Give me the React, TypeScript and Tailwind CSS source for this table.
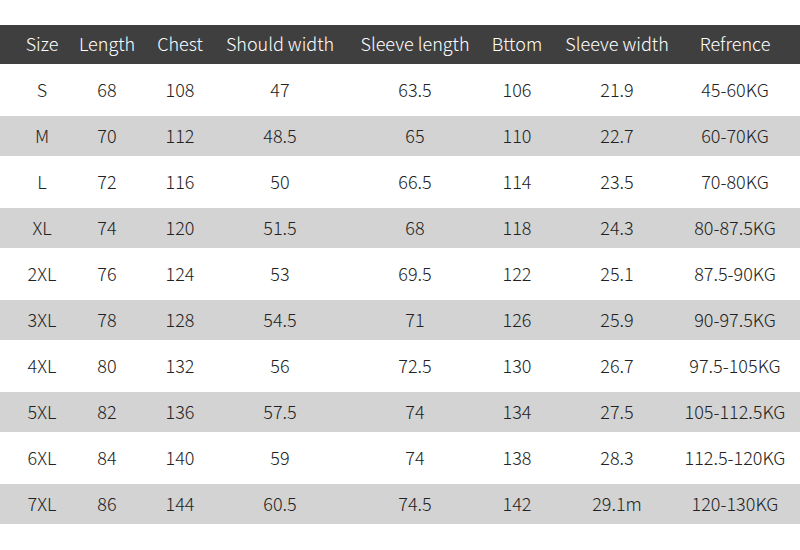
const cols = [
  { c: 'w-[84px]' },
  { c: 'w-[46px]' },
  { c: 'w-[100px]' },
  { c: 'w-[100px]' },
  { c: 'w-[170px]' },
  { c: 'w-[34px]' },
  { c: 'w-[166px]' },
  { c: 'w-[70px]' },
];

const header = ['Size', 'Length', 'Chest', 'Should width', 'Sleeve length', 'Bttom', 'Sleeve width', 'Refrence'];

const rows = [
  ['S', '68', '108', '47', '63.5', '106', '21.9', '45-60KG'],
  ['M', '70', '112', '48.5', '65', '110', '22.7', '60-70KG'],
  ['L', '72', '116', '50', '66.5', '114', '23.5', '70-80KG'],
  ['XL', '74', '120', '51.5', '68', '118', '24.3', '80-87.5KG'],
  ['2XL', '76', '124', '53', '69.5', '122', '25.1', '87.5-90KG'],
  ['3XL', '78', '128', '54.5', '71', '126', '25.9', '90-97.5KG'],
  ['4XL', '80', '132', '56', '72.5', '130', '26.7', '97.5-105KG'],
  ['5XL', '82', '136', '57.5', '74', '134', '27.5', '105-112.5KG'],
  ['6XL', '84', '140', '59', '74', '138', '28.3', '112.5-120KG'],
  ['7XL', '86', '144', '60.5', '74.5', '142', '29.1m', '120-130KG'],
];

function Cells({ values }: { values: string[] }) {
  return (
    <>
      {values.map((v, i) => (
        <div key={i} className={`${cols[i].c} flex-none flex justify-center whitespace-nowrap`}>
          <span>{v}</span>
        </div>
      ))}
    </>
  );
}

export default function App() {
  return (
    <div
      className="w-[800px] h-[550px] bg-white overflow-hidden pt-[25px] text-[18px] font-light"
      style={{ fontFamily: '"Noto Sans CJK SC", "Noto Sans", sans-serif' }}
    >
      <div className="h-[39px] pb-[2px] bg-[#3f3f3f] text-white flex items-center">
        <Cells values={header} />
      </div>
      <div className="pt-[3px]">
        {rows.map((r, i) => (
          <div key={r[0]} className="py-[3px]">
            <div
              className={`h-[40px] pb-[2px] flex items-center text-[#222222] ${i % 2 === 1 ? 'bg-[#d3d3d3]' : 'bg-white'}`}
            >
              <Cells values={r} />
            </div>
          </div>
        ))}
      </div>
    </div>
  );
}
